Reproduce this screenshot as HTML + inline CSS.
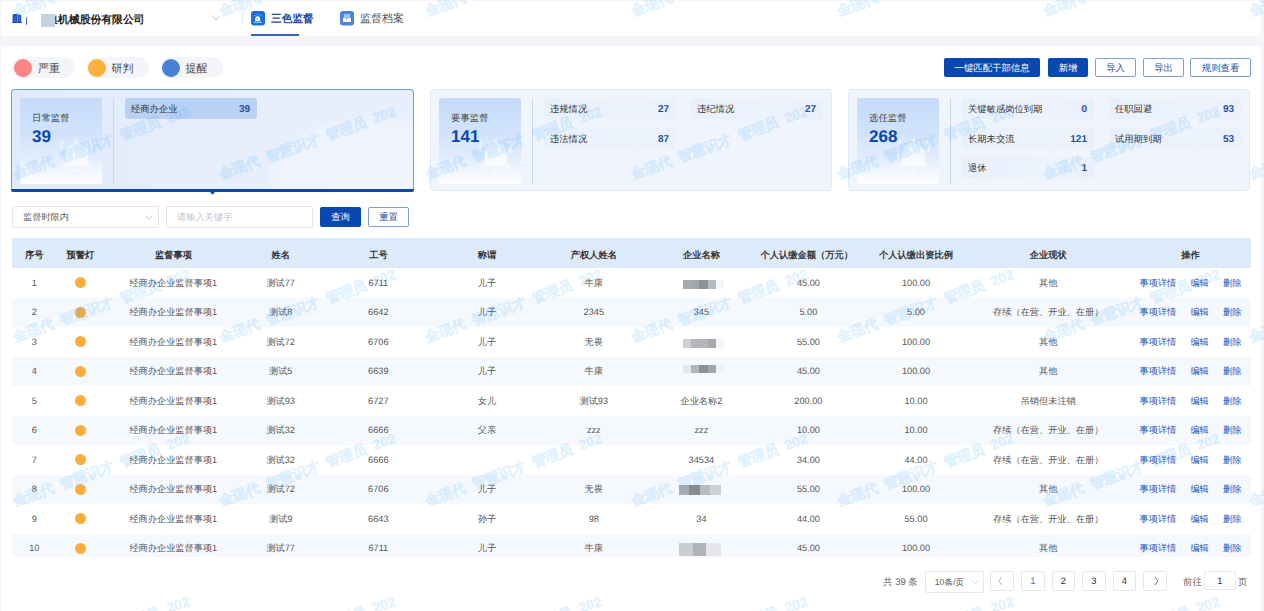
<!DOCTYPE html>
<html><head><meta charset="utf-8">
<style>
*{box-sizing:border-box;margin:0;padding:0}
html,body{width:1264px;height:611px;overflow:hidden;background:#f3f5f9;font-family:"Liberation Sans",sans-serif;color:#303133;text-rendering:geometricPrecision}
.a{position:absolute}
#hdr{left:1px;top:1px;width:1260px;height:35px;background:#fff;border-radius:3px}
#main{left:1px;top:46px;width:1260px;height:570px;background:#fff;border-radius:3px}
.pill{top:57px;height:21px;width:63px;border-radius:11px;background:#f3f5f9}
.pill i{position:absolute;left:2px;top:2px;width:18px;height:18px;border-radius:50%}
.pill span{position:absolute;left:26px;top:4.8px;font-size:11px;line-height:15px;color:#444}
.btn{top:58px;height:19px;font-size:9.4px;line-height:19px;text-align:center;border-radius:2px}
.bf{background:#0a48b1;color:#fff}
.bo{border:1px solid #7d9fd6;color:#1e4fa6;line-height:17px;background:#fff}
.card{top:89px;width:402px;height:102px;border:1px solid #dde8f8;border-radius:4px;background:#f0f5fd}
.card .ib{position:absolute;left:8px;top:8px;width:82px;height:86px;border-radius:2px;overflow:hidden;background:linear-gradient(180deg,#c5dbfa 0%,#d0e3fb 40%,#e2edfc 70%,#f2f7fe 88%,#f8fbff 100%)}
.card .ib b{position:absolute;left:12px;top:13px;font-size:9.4px;font-weight:normal;color:#444;line-height:14px}
.card .ib em{position:absolute;left:12px;top:29px;font-size:17px;font-weight:bold;font-style:normal;color:#0b47ac;line-height:20px}
.card .dv{position:absolute;left:101px;top:8px;width:1px;height:86px;background:#c7d9f2}
.it{position:absolute;width:132px;height:21px;border-radius:3px;background:linear-gradient(90deg,#e8f0fc,#edf3fd 70%,#e8f0fc)}
.it span{position:absolute;left:6px;top:4px;font-size:9.3px;line-height:14px;color:#333}
.it b{position:absolute;right:7px;top:4.5px;font-size:10px;line-height:14px;color:#1c4ea8}
.sel{border:1.2px solid #709be0;background:radial-gradient(ellipse 112px 74px at 362px 98px,#f0f5fe 0%,#eef3fd 90%,rgba(238,243,253,0) 100%),linear-gradient(90deg,#e0eafc,#e6eefc 40%,#e8effc);border-bottom:none}
.th{width:160px;text-align:center;font-size:9.25px;font-weight:bold;line-height:14px;color:#333}
.td{width:160px;text-align:center;font-size:9.2px;line-height:14px;color:#555}
.op{font-size:9.2px;line-height:14px;color:#2257b8}
.dot{width:11px;height:11px;border-radius:50%;background:#fdad3b}
.inp{top:206px;height:22px;border:1px solid #e4e7ed;border-radius:2px;background:#fff;font-size:9.2px;line-height:20px}
.pg{top:571px;width:23.5px;height:19.5px;border:1px solid #e4e7ed;border-radius:2px;background:#fff;font-size:9.4px;line-height:17.5px;text-align:center;color:#303133}
.wm{position:absolute;width:260px;height:14px;font-size:14px;line-height:14px;white-space:pre;color:#1e9bff;-webkit-text-stroke:0.5px #1e9bff;opacity:.125;font-weight:bold;transform-origin:0 100%;transform:rotate(-20deg);pointer-events:none;z-index:9}
.bell{position:absolute;left:0;top:0}
.ib::after{content:"";position:absolute;left:0;right:0;bottom:0;height:16px;background:linear-gradient(180deg,rgba(255,255,255,0),rgba(255,255,255,.55))}
</style></head><body>
<div class="a" id="hdr"></div>
<div class="a" id="main"></div>

<!-- header contents -->
<svg class="a" style="left:11px;top:12px" width="12" height="12" viewBox="0 0 12 12"><path d="M1.6 2.6 L6.2 1.5 V10.6 H1.6Z M6.6 2.3 L10.2 3.2 V10.6 H6.6Z M1 10.1 H10.8 V11 H1Z" fill="#1a4cbd"/><path d="M2.7 4.4h2.2v.7h-2.2z M2.7 6.1h2.2v.7h-2.2z M2.7 8.1h2.2v.7h-2.2z M7.4 4.6h1.8v.7h-1.8z M7.4 6.3h1.8v.7h-1.8z M7.4 8.1h1.8v.7h-1.8z" fill="#5f88d8"/></svg>
<div class="a" style="left:26px;top:17px;width:1px;height:7.5px;background:#3f6fc8;border-radius:1px"></div>
<div class="a" style="left:47.3px;top:12.5px;font-size:10.8px;font-weight:bold;line-height:15px;color:#222">集机械股份有限公司</div>
<div class="a" style="left:41px;top:14px;width:13.5px;height:13px;background:#c3d3e0"></div>
<svg class="a" style="left:212px;top:16px" width="8" height="5" viewBox="0 0 8 5"><path d="M0.5 0.5 L4 4 L7.5 0.5" fill="none" stroke="#b0b4bc" stroke-width="0.9"/></svg>
<div class="a" style="left:242px;top:10px;width:1px;height:16px;background:#e6e8ec"></div>
<svg class="a" style="left:251px;top:11px" width="14" height="14.5" viewBox="0 0 14 14.5"><rect width="14" height="14.5" rx="3" fill="#1a6fdf"/><path d="M4.2 9.9 V7.6 A2.45 2.45 0 0 1 9.1 7.6 V9.9Z" fill="#fff"/><path d="M3 10.8 H10.6 V11.7 H3Z" fill="#fff" opacity=".85"/><path d="M6.75 3 V4.3 M3.4 4.1 L4.3 5 M10.1 4.1 L9.2 5" stroke="#fff" stroke-width=".8" opacity=".6"/><ellipse cx="6.3" cy="7.8" rx=".6" ry="1" fill="#1a6fdf" opacity=".8"/></svg>
<div class="a" style="left:271px;top:12.3px;font-size:10.7px;font-weight:bold;line-height:15px;color:#1a4aa6">三色监督</div>
<div class="a" style="left:251px;top:34px;width:48px;height:2px;background:#3567c2"></div>
<svg class="a" style="left:340px;top:11px" width="14" height="14.5" viewBox="0 0 14 14.5"><rect width="14" height="14.5" rx="3" fill="#4883dc"/><rect x="3.8" y="3" width="6.4" height="4.5" fill="#fff" opacity=".5"/><path d="M3 6.9 H5.6 L7 8.6 L8.4 6.9 H11 V11.1 H3Z" fill="#fff"/></svg>
<div class="a" style="left:360px;top:12px;font-size:11px;line-height:15px;color:#555">监督档案</div>

<!-- legend pills -->
<div class="a pill" style="left:12px"><i style="background:#fd8585"></i><span>严重</span></div>
<div class="a pill" style="left:85.6px"><i style="background:#fdb03c"></i><span>研判</span></div>
<div class="a pill" style="left:159.5px"><i style="background:#4a7fd6"></i><span>提醒</span></div>

<!-- buttons -->
<div class="a btn bf" style="left:944px;width:96px">一键匹配干部信息</div>
<div class="a btn bf" style="left:1048px;width:40px">新增</div>
<div class="a btn bo" style="left:1095px;width:41px">导入</div>
<div class="a btn bo" style="left:1143px;width:41px">导出</div>
<div class="a btn bo" style="left:1190px;width:61px">规则查看</div>

<!-- cards -->
<div class="a card sel" style="left:11px;width:403px">
  <div class="ib"><svg class="bell" width="82" height="86" viewBox="0 0 82 86"><defs><linearGradient id="bg1" x1="0" y1="0" x2="0" y2="1"><stop offset="0" stop-color="#fff" stop-opacity=".5"/><stop offset="1" stop-color="#fff" stop-opacity=".75"/></linearGradient></defs><path d="M42 54 Q39.5 47.5 43.5 42" fill="none" stroke="#fff" stroke-width="2.2" opacity=".5"/><path d="M71 54 Q73.5 47.5 69.5 42" fill="none" stroke="#fff" stroke-width="2.2" opacity=".5"/><circle cx="56.5" cy="43" r="2.2" fill="#fff" opacity=".5"/><path d="M45 67 V56.5 A11.5 11.5 0 0 1 68 56.5 V67 Z" fill="url(#bg1)"/><rect x="41" y="66" width="31" height="3.5" rx="1" fill="#fff" opacity=".45"/><ellipse cx="56.5" cy="72" rx="3.2" ry="1.6" fill="#fff" opacity=".6"/></svg><b>日常监督</b><em>39</em></div>
  <div class="dv"></div>
  <div class="it" style="left:113px;top:8px;background:#b9d1f3"><span>经商办企业</span><b>39</b></div>
</div>
<div class="a" style="left:11px;top:189px;width:403px;height:3px;background:#0a46ad;border-radius:0 0 2px 2px"></div>
<svg class="a" style="left:209px;top:191px" width="7" height="4" viewBox="0 0 7 4"><path d="M0 0 H7 L3.5 3.8Z" fill="#0a46ad"/></svg>

<div class="a card" style="left:430px">
  <div class="ib"><svg class="bell" width="82" height="86" viewBox="0 0 82 86"><defs><linearGradient id="bg1" x1="0" y1="0" x2="0" y2="1"><stop offset="0" stop-color="#fff" stop-opacity=".5"/><stop offset="1" stop-color="#fff" stop-opacity=".75"/></linearGradient></defs><path d="M42 54 Q39.5 47.5 43.5 42" fill="none" stroke="#fff" stroke-width="2.2" opacity=".5"/><path d="M71 54 Q73.5 47.5 69.5 42" fill="none" stroke="#fff" stroke-width="2.2" opacity=".5"/><circle cx="56.5" cy="43" r="2.2" fill="#fff" opacity=".5"/><path d="M45 67 V56.5 A11.5 11.5 0 0 1 68 56.5 V67 Z" fill="url(#bg1)"/><rect x="41" y="66" width="31" height="3.5" rx="1" fill="#fff" opacity=".45"/><ellipse cx="56.5" cy="72" rx="3.2" ry="1.6" fill="#fff" opacity=".6"/></svg><b>要事监督</b><em>141</em></div>
  <div class="dv"></div>
  <div class="it" style="left:113px;top:8px"><span>违规情况</span><b>27</b></div>
  <div class="it" style="left:260px;top:8px"><span>违纪情况</span><b>27</b></div>
  <div class="it" style="left:113px;top:38px"><span>违法情况</span><b>87</b></div>
</div>
<div class="a card" style="left:848px">
  <div class="ib"><svg class="bell" width="82" height="86" viewBox="0 0 82 86"><defs><linearGradient id="bg1" x1="0" y1="0" x2="0" y2="1"><stop offset="0" stop-color="#fff" stop-opacity=".5"/><stop offset="1" stop-color="#fff" stop-opacity=".75"/></linearGradient></defs><path d="M42 54 Q39.5 47.5 43.5 42" fill="none" stroke="#fff" stroke-width="2.2" opacity=".5"/><path d="M71 54 Q73.5 47.5 69.5 42" fill="none" stroke="#fff" stroke-width="2.2" opacity=".5"/><circle cx="56.5" cy="43" r="2.2" fill="#fff" opacity=".5"/><path d="M45 67 V56.5 A11.5 11.5 0 0 1 68 56.5 V67 Z" fill="url(#bg1)"/><rect x="41" y="66" width="31" height="3.5" rx="1" fill="#fff" opacity=".45"/><ellipse cx="56.5" cy="72" rx="3.2" ry="1.6" fill="#fff" opacity=".6"/></svg><b>选任监督</b><em>268</em></div>
  <div class="dv"></div>
  <div class="it" style="left:113px;top:8px"><span>关键敏感岗位到期</span><b>0</b></div>
  <div class="it" style="left:260px;top:8px"><span>任职回避</span><b>93</b></div>
  <div class="it" style="left:113px;top:38px"><span>长期未交流</span><b>121</b></div>
  <div class="it" style="left:260px;top:38px"><span>试用期到期</span><b>53</b></div>
  <div class="it" style="left:113px;top:67px"><span>退休</span><b>1</b></div>
</div>


<!-- filter row -->
<div class="a inp" style="left:12px;width:147px"><span class="a" style="left:10px;top:0;color:#606266">监督时限内</span>
<svg class="a" style="left:132px;top:8px" width="8" height="5" viewBox="0 0 8 5"><path d="M0.5 0.5 L4 4 L7.5 0.5" fill="none" stroke="#c0c4cc" stroke-width="0.9"/></svg></div>
<div class="a inp" style="left:166px;width:147px"><span class="a" style="left:10px;top:0;color:#c0c4cc">请输入关键字</span></div>
<div class="a btn bf" style="left:320px;top:207px;width:41px;height:19.5px;line-height:19.5px">查询</div>
<div class="a btn bo" style="left:368px;top:206.5px;width:41px;height:20.5px;line-height:18.5px">重置</div>
<div class="a" style="left:12px;top:238px;width:1239px;height:30px;background:#ddeaf9;z-index:10"></div>
<div class="a th" style="left:-45.7px;top:248px;z-index:11">序号</div>
<div class="a th" style="left:0.29999999999999716px;top:248px;z-index:11">预警灯</div>
<div class="a th" style="left:93.6px;top:248px;z-index:11">监督事项</div>
<div class="a th" style="left:200.7px;top:248px;z-index:11">姓名</div>
<div class="a th" style="left:298.4px;top:248px;z-index:11">工号</div>
<div class="a th" style="left:406.9px;top:248px;z-index:11">称谓</div>
<div class="a th" style="left:513.8px;top:248px;z-index:11">产权人姓名</div>
<div class="a th" style="left:621.4px;top:248px;z-index:11">企业名称</div>
<div class="a th" style="left:726.8px;top:248px;z-index:11">个人认缴金额（万元）</div>
<div class="a th" style="left:836px;top:248px;z-index:11">个人认缴出资比例</div>
<div class="a th" style="left:968.2px;top:248px;z-index:11">企业现状</div>
<div class="a th" style="left:1110.6px;top:248px;z-index:11">操作</div>
<div class="a td" style="left:-45.7px;top:275.8px">1</div>
<div class="a dot" style="left:75px;top:277.3px"></div>
<div class="a td" style="left:93.30000000000001px;top:275.8px">经商办企业监督事项1</div>
<div class="a td" style="left:200.7px;top:275.8px">测试77</div>
<div class="a td" style="left:298.3px;top:275.8px">6711</div>
<div class="a td" style="left:406.9px;top:275.8px">儿子</div>
<div class="a td" style="left:513.8px;top:275.8px">牛康</div>
<div class="a" style="left:683px;top:279.7px;width:9px;height:9.3px;background:#a8abb0"></div>
<div class="a" style="left:692px;top:279.7px;width:7px;height:9.3px;background:#a3a6ab"></div>
<div class="a" style="left:699px;top:279.7px;width:9px;height:9.3px;background:#8e9196"></div>
<div class="a" style="left:708px;top:279.7px;width:8px;height:9.3px;background:#b7babe"></div>
<div class="a" style="left:716px;top:279.7px;width:8px;height:9.3px;background:#f5f6f7"></div>
<div class="a td" style="left:728.4px;top:275.8px">45.00</div>
<div class="a td" style="left:836px;top:275.8px">100.00</div>
<div class="a td" style="left:968.2px;top:275.8px">其他</div>
<div class="a op" style="left:1139.5px;top:275.8px">事项详情</div>
<div class="a op" style="left:1190.4px;top:275.8px">编辑</div>
<div class="a op" style="left:1223px;top:275.8px">删除</div>
<div class="a" style="left:12px;top:297.5px;width:1239px;height:29.5px;background:#f5f9fe"></div>
<div class="a td" style="left:-45.7px;top:305.3px">2</div>
<div class="a dot" style="left:75px;top:306.8px"></div>
<div class="a td" style="left:93.30000000000001px;top:305.3px">经商办企业监督事项1</div>
<div class="a td" style="left:200.7px;top:305.3px">测试8</div>
<div class="a td" style="left:298.3px;top:305.3px">6642</div>
<div class="a td" style="left:406.9px;top:305.3px">儿子</div>
<div class="a td" style="left:513.8px;top:305.3px">2345</div>
<div class="a td" style="left:621.4px;top:305.3px">345</div>
<div class="a td" style="left:728.4px;top:305.3px">5.00</div>
<div class="a td" style="left:836px;top:305.3px">5.00</div>
<div class="a td" style="left:968.2px;top:305.3px">存续（在营、开业、在册）</div>
<div class="a op" style="left:1139.5px;top:305.3px">事项详情</div>
<div class="a op" style="left:1190.4px;top:305.3px">编辑</div>
<div class="a op" style="left:1223px;top:305.3px">删除</div>
<div class="a td" style="left:-45.7px;top:334.8px">3</div>
<div class="a dot" style="left:75px;top:336.3px"></div>
<div class="a td" style="left:93.30000000000001px;top:334.8px">经商办企业监督事项1</div>
<div class="a td" style="left:200.7px;top:334.8px">测试72</div>
<div class="a td" style="left:298.3px;top:334.8px">6706</div>
<div class="a td" style="left:406.9px;top:334.8px">儿子</div>
<div class="a td" style="left:513.8px;top:334.8px">无畏</div>
<div class="a" style="left:683px;top:339.3px;width:8px;height:8.6px;background:#cdd0d3"></div>
<div class="a" style="left:691px;top:339.3px;width:17px;height:8.6px;background:#b3b6ba"></div>
<div class="a" style="left:708px;top:339.3px;width:8px;height:8.6px;background:#a5a8ac"></div>
<div class="a" style="left:716px;top:339.3px;width:8px;height:8.6px;background:#f3f4f5"></div>
<div class="a td" style="left:728.4px;top:334.8px">55.00</div>
<div class="a td" style="left:836px;top:334.8px">100.00</div>
<div class="a td" style="left:968.2px;top:334.8px">其他</div>
<div class="a op" style="left:1139.5px;top:334.8px">事项详情</div>
<div class="a op" style="left:1190.4px;top:334.8px">编辑</div>
<div class="a op" style="left:1223px;top:334.8px">删除</div>
<div class="a" style="left:12px;top:356.5px;width:1239px;height:29.5px;background:#f5f9fe"></div>
<div class="a td" style="left:-45.7px;top:364.3px">4</div>
<div class="a dot" style="left:75px;top:365.8px"></div>
<div class="a td" style="left:93.30000000000001px;top:364.3px">经商办企业监督事项1</div>
<div class="a td" style="left:200.7px;top:364.3px">测试5</div>
<div class="a td" style="left:298.3px;top:364.3px">6639</div>
<div class="a td" style="left:406.9px;top:364.3px">儿子</div>
<div class="a td" style="left:513.8px;top:364.3px">牛康</div>
<div class="a" style="left:683px;top:365.2px;width:8px;height:8px;background:#e5e7ea"></div>
<div class="a" style="left:691px;top:365.2px;width:8px;height:8px;background:#b3b6ba"></div>
<div class="a" style="left:699px;top:365.2px;width:9px;height:8px;background:#8d9095"></div>
<div class="a" style="left:708px;top:365.2px;width:8px;height:8px;background:#a3a6aa"></div>
<div class="a" style="left:716px;top:365.2px;width:8px;height:8px;background:#f1f2f4"></div>
<div class="a td" style="left:728.4px;top:364.3px">45.00</div>
<div class="a td" style="left:836px;top:364.3px">100.00</div>
<div class="a td" style="left:968.2px;top:364.3px">其他</div>
<div class="a op" style="left:1139.5px;top:364.3px">事项详情</div>
<div class="a op" style="left:1190.4px;top:364.3px">编辑</div>
<div class="a op" style="left:1223px;top:364.3px">删除</div>
<div class="a td" style="left:-45.7px;top:393.8px">5</div>
<div class="a dot" style="left:75px;top:395.3px"></div>
<div class="a td" style="left:93.30000000000001px;top:393.8px">经商办企业监督事项1</div>
<div class="a td" style="left:200.7px;top:393.8px">测试93</div>
<div class="a td" style="left:298.3px;top:393.8px">6727</div>
<div class="a td" style="left:406.9px;top:393.8px">女儿</div>
<div class="a td" style="left:513.8px;top:393.8px">测试93</div>
<div class="a td" style="left:621.4px;top:393.8px">企业名称2</div>
<div class="a td" style="left:728.4px;top:393.8px">200.00</div>
<div class="a td" style="left:836px;top:393.8px">10.00</div>
<div class="a td" style="left:968.2px;top:393.8px">吊销但未注销</div>
<div class="a op" style="left:1139.5px;top:393.8px">事项详情</div>
<div class="a op" style="left:1190.4px;top:393.8px">编辑</div>
<div class="a op" style="left:1223px;top:393.8px">删除</div>
<div class="a" style="left:12px;top:415.5px;width:1239px;height:29.5px;background:#f5f9fe"></div>
<div class="a td" style="left:-45.7px;top:423.3px">6</div>
<div class="a dot" style="left:75px;top:424.8px"></div>
<div class="a td" style="left:93.30000000000001px;top:423.3px">经商办企业监督事项1</div>
<div class="a td" style="left:200.7px;top:423.3px">测试32</div>
<div class="a td" style="left:298.3px;top:423.3px">6666</div>
<div class="a td" style="left:406.9px;top:423.3px">父亲</div>
<div class="a td" style="left:513.8px;top:423.3px">zzz</div>
<div class="a td" style="left:621.4px;top:423.3px">zzz</div>
<div class="a td" style="left:728.4px;top:423.3px">10.00</div>
<div class="a td" style="left:836px;top:423.3px">10.00</div>
<div class="a td" style="left:968.2px;top:423.3px">存续（在营、开业、在册）</div>
<div class="a op" style="left:1139.5px;top:423.3px">事项详情</div>
<div class="a op" style="left:1190.4px;top:423.3px">编辑</div>
<div class="a op" style="left:1223px;top:423.3px">删除</div>
<div class="a td" style="left:-45.7px;top:452.8px">7</div>
<div class="a dot" style="left:75px;top:454.3px"></div>
<div class="a td" style="left:93.30000000000001px;top:452.8px">经商办企业监督事项1</div>
<div class="a td" style="left:200.7px;top:452.8px">测试32</div>
<div class="a td" style="left:298.3px;top:452.8px">6666</div>
<div class="a td" style="left:406.9px;top:452.8px"></div>
<div class="a td" style="left:513.8px;top:452.8px"></div>
<div class="a td" style="left:621.4px;top:452.8px">34534</div>
<div class="a td" style="left:728.4px;top:452.8px">34.00</div>
<div class="a td" style="left:836px;top:452.8px">44.00</div>
<div class="a td" style="left:968.2px;top:452.8px">存续（在营、开业、在册）</div>
<div class="a op" style="left:1139.5px;top:452.8px">事项详情</div>
<div class="a op" style="left:1190.4px;top:452.8px">编辑</div>
<div class="a op" style="left:1223px;top:452.8px">删除</div>
<div class="a" style="left:12px;top:474.5px;width:1239px;height:29.5px;background:#f5f9fe"></div>
<div class="a td" style="left:-45.7px;top:482.3px">8</div>
<div class="a dot" style="left:75px;top:483.8px"></div>
<div class="a td" style="left:93.30000000000001px;top:482.3px">经商办企业监督事项1</div>
<div class="a td" style="left:200.7px;top:482.3px">测试72</div>
<div class="a td" style="left:298.3px;top:482.3px">6706</div>
<div class="a td" style="left:406.9px;top:482.3px">儿子</div>
<div class="a td" style="left:513.8px;top:482.3px">无畏</div>
<div class="a" style="left:679px;top:485.3px;width:10px;height:9.7px;background:#a9acb1"></div>
<div class="a" style="left:689px;top:485.3px;width:11px;height:9.7px;background:#878a90"></div>
<div class="a" style="left:700px;top:485.3px;width:10px;height:9.7px;background:#b8bbbf"></div>
<div class="a" style="left:710px;top:485.3px;width:11px;height:9.7px;background:#cfd2d5"></div>
<div class="a td" style="left:728.4px;top:482.3px">55.00</div>
<div class="a td" style="left:836px;top:482.3px">100.00</div>
<div class="a td" style="left:968.2px;top:482.3px">其他</div>
<div class="a op" style="left:1139.5px;top:482.3px">事项详情</div>
<div class="a op" style="left:1190.4px;top:482.3px">编辑</div>
<div class="a op" style="left:1223px;top:482.3px">删除</div>
<div class="a td" style="left:-45.7px;top:511.8px">9</div>
<div class="a dot" style="left:75px;top:513.3px"></div>
<div class="a td" style="left:93.30000000000001px;top:511.8px">经商办企业监督事项1</div>
<div class="a td" style="left:200.7px;top:511.8px">测试9</div>
<div class="a td" style="left:298.3px;top:511.8px">6643</div>
<div class="a td" style="left:406.9px;top:511.8px">孙子</div>
<div class="a td" style="left:513.8px;top:511.8px">98</div>
<div class="a td" style="left:621.4px;top:511.8px">34</div>
<div class="a td" style="left:728.4px;top:511.8px">44.00</div>
<div class="a td" style="left:836px;top:511.8px">55.00</div>
<div class="a td" style="left:968.2px;top:511.8px">存续（在营、开业、在册）</div>
<div class="a op" style="left:1139.5px;top:511.8px">事项详情</div>
<div class="a op" style="left:1190.4px;top:511.8px">编辑</div>
<div class="a op" style="left:1223px;top:511.8px">删除</div>
<div class="a" style="left:12px;top:533.5px;width:1239px;height:23.0px;background:#f5f9fe"></div>
<div class="a td" style="left:-45.7px;top:541.3px">10</div>
<div class="a dot" style="left:75px;top:542.8px"></div>
<div class="a td" style="left:93.30000000000001px;top:541.3px">经商办企业监督事项1</div>
<div class="a td" style="left:200.7px;top:541.3px">测试77</div>
<div class="a td" style="left:298.3px;top:541.3px">6711</div>
<div class="a td" style="left:406.9px;top:541.3px">儿子</div>
<div class="a td" style="left:513.8px;top:541.3px">牛康</div>
<div class="a" style="left:679px;top:542.6px;width:14px;height:13.9px;background:#cacdd1"></div>
<div class="a" style="left:693px;top:542.6px;width:13px;height:13.9px;background:#b0b3b8"></div>
<div class="a" style="left:706px;top:542.6px;width:15px;height:13.9px;background:#e5e7ea"></div>
<div class="a td" style="left:728.4px;top:541.3px">45.00</div>
<div class="a td" style="left:836px;top:541.3px">100.00</div>
<div class="a td" style="left:968.2px;top:541.3px">其他</div>
<div class="a op" style="left:1139.5px;top:541.3px">事项详情</div>
<div class="a op" style="left:1190.4px;top:541.3px">编辑</div>
<div class="a op" style="left:1223px;top:541.3px">删除</div>
<!-- pagination -->
<div class="a" style="left:883px;top:576.2px;font-size:9.5px;line-height:14px;color:#606266">共 39 条</div>
<div class="a pg" style="left:925px;width:59px;height:21.5px;text-align:left;padding-left:8.8px;line-height:21px;font-size:8.6px;color:#606266">10条/页</div>
<svg class="a" style="left:972px;top:580px" width="7" height="4" viewBox="0 0 7 4"><path d="M0.5 0.5 L3.5 3.5 L6.5 0.5" fill="none" stroke="#c0c4cc" stroke-width="0.8"/></svg>
<div class="a pg" style="left:990px"><svg width="8" height="10" viewBox="0 0 8 10" style="margin-top:4px"><path d="M3.7 1 L0.7 5 L3.7 9" fill="none" stroke="#a8abb2" stroke-width="0.9"/></svg></div>
<div class="a pg" style="left:1021px;color:#2f7ae5">1</div>
<div class="a pg" style="left:1051.5px">2</div>
<div class="a pg" style="left:1082px">3</div>
<div class="a pg" style="left:1112.5px">4</div>
<div class="a pg" style="left:1143px"><svg width="8" height="10" viewBox="0 0 8 10" style="margin-top:4px"><path d="M4 1 L7 5 L4 9" fill="none" stroke="#606266" stroke-width="0.9"/></svg></div>
<div class="a" style="left:1183px;top:575px;font-size:9.4px;line-height:14px;color:#606266">前往</div>
<div class="a pg" style="left:1204px;width:31.5px;height:19px;border-radius:3px">1</div>
<div class="a" style="left:1238px;top:575px;font-size:9.4px;line-height:14px;color:#606266">页</div>
<!-- watermark -->
<div class="wm" style="left:-190.4px;top:3.9px">金现代  智慧识才  管理员  202</div>
<div class="wm" style="left:15.7px;top:3.9px">金现代  智慧识才  管理员  202</div>
<div class="wm" style="left:221.8px;top:3.9px">金现代  智慧识才  管理员  202</div>
<div class="wm" style="left:427.9px;top:3.9px">金现代  智慧识才  管理员  202</div>
<div class="wm" style="left:634.0px;top:3.9px">金现代  智慧识才  管理员  202</div>
<div class="wm" style="left:840.1px;top:3.9px">金现代  智慧识才  管理员  202</div>
<div class="wm" style="left:1046.2px;top:3.9px">金现代  智慧识才  管理员  202</div>
<div class="wm" style="left:1252.3px;top:3.9px">金现代  智慧识才  管理员  202</div>
<div class="wm" style="left:-190.4px;top:167.1px">金现代  智慧识才  管理员  202</div>
<div class="wm" style="left:15.7px;top:167.1px">金现代  智慧识才  管理员  202</div>
<div class="wm" style="left:221.8px;top:167.1px">金现代  智慧识才  管理员  202</div>
<div class="wm" style="left:427.9px;top:167.1px">金现代  智慧识才  管理员  202</div>
<div class="wm" style="left:634.0px;top:167.1px">金现代  智慧识才  管理员  202</div>
<div class="wm" style="left:840.1px;top:167.1px">金现代  智慧识才  管理员  202</div>
<div class="wm" style="left:1046.2px;top:167.1px">金现代  智慧识才  管理员  202</div>
<div class="wm" style="left:1252.3px;top:167.1px">金现代  智慧识才  管理员  202</div>
<div class="wm" style="left:-190.4px;top:330.3px">金现代  智慧识才  管理员  202</div>
<div class="wm" style="left:15.7px;top:330.3px">金现代  智慧识才  管理员  202</div>
<div class="wm" style="left:221.8px;top:330.3px">金现代  智慧识才  管理员  202</div>
<div class="wm" style="left:427.9px;top:330.3px">金现代  智慧识才  管理员  202</div>
<div class="wm" style="left:634.0px;top:330.3px">金现代  智慧识才  管理员  202</div>
<div class="wm" style="left:840.1px;top:330.3px">金现代  智慧识才  管理员  202</div>
<div class="wm" style="left:1046.2px;top:330.3px">金现代  智慧识才  管理员  202</div>
<div class="wm" style="left:1252.3px;top:330.3px">金现代  智慧识才  管理员  202</div>
<div class="wm" style="left:-190.4px;top:493.5px">金现代  智慧识才  管理员  202</div>
<div class="wm" style="left:15.7px;top:493.5px">金现代  智慧识才  管理员  202</div>
<div class="wm" style="left:221.8px;top:493.5px">金现代  智慧识才  管理员  202</div>
<div class="wm" style="left:427.9px;top:493.5px">金现代  智慧识才  管理员  202</div>
<div class="wm" style="left:634.0px;top:493.5px">金现代  智慧识才  管理员  202</div>
<div class="wm" style="left:840.1px;top:493.5px">金现代  智慧识才  管理员  202</div>
<div class="wm" style="left:1046.2px;top:493.5px">金现代  智慧识才  管理员  202</div>
<div class="wm" style="left:1252.3px;top:493.5px">金现代  智慧识才  管理员  202</div>
<div class="wm" style="left:-190.4px;top:656.7px">金现代  智慧识才  管理员  202</div>
<div class="wm" style="left:15.7px;top:656.7px">金现代  智慧识才  管理员  202</div>
<div class="wm" style="left:221.8px;top:656.7px">金现代  智慧识才  管理员  202</div>
<div class="wm" style="left:427.9px;top:656.7px">金现代  智慧识才  管理员  202</div>
<div class="wm" style="left:634.0px;top:656.7px">金现代  智慧识才  管理员  202</div>
<div class="wm" style="left:840.1px;top:656.7px">金现代  智慧识才  管理员  202</div>
<div class="wm" style="left:1046.2px;top:656.7px">金现代  智慧识才  管理员  202</div>
<div class="wm" style="left:1252.3px;top:656.7px">金现代  智慧识才  管理员  202</div>
</body></html>
